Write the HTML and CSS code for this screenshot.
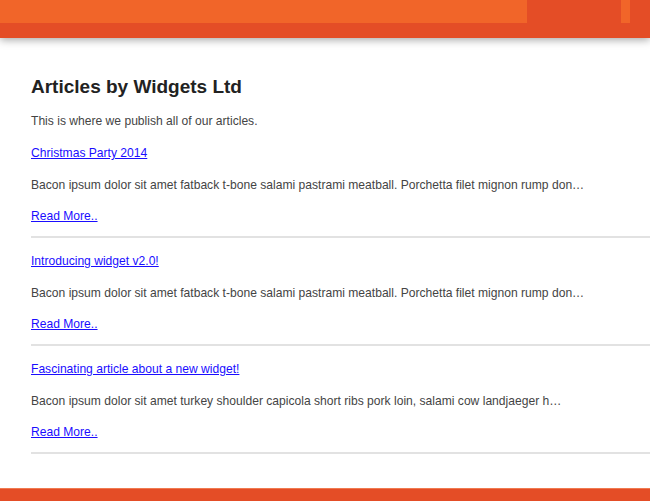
FILE: index.html
```html
<!DOCTYPE html>
<html>
<head>
<meta charset="utf-8">
<link rel="stylesheet" href="styles.css">
</head>
<body>
<header class="top">
  <div class="top-row">
    <div class="top-main"></div>
    <div class="top-gap"></div>
    <div class="top-small"></div>
    <div class="top-end"></div>
  </div>
</header>
<main class="content">
  <h1 class="title">Articles by Widgets Ltd</h1>
  <p class="intro">This is where we publish all of our articles.</p>
  <article class="article">
    <p><a href="#">Christmas Party 2014</a></p>
    <p class="summary">Bacon ipsum dolor sit amet fatback t-bone salami pastrami meatball. Porchetta filet mignon rump don…</p>
    <p><a href="#">Read More..</a></p>
  </article>
  <article class="article">
    <p><a href="#">Introducing widget v2.0!</a></p>
    <p class="summary">Bacon ipsum dolor sit amet fatback t-bone salami pastrami meatball. Porchetta filet mignon rump don…</p>
    <p><a href="#">Read More..</a></p>
  </article>
  <article class="article">
    <p><a href="#">Fascinating article about a new widget!</a></p>
    <p class="summary">Bacon ipsum dolor sit amet turkey shoulder capicola short ribs pork loin, salami cow landjaeger h…</p>
    <p><a href="#">Read More..</a></p>
  </article>
</main>
<footer class="bottom"></footer>
</body>
</html>
```

FILE: styles.css
```css
html, body {
  margin: 0;
  padding: 0;
  height: 100%;
  overflow: hidden;
}
body {
  font-family: "Liberation Sans", Arial, sans-serif;
  color: #444;
  font-size: 12.1px;
  line-height: 18px;
  background: #fff;
  display: flex;
  flex-direction: column;
}
.top {
  height: 38px;
  background: #e44d26;
  box-shadow: 0 2px 8px rgba(0,0,0,0.35);
  position: relative;
  z-index: 1;
  flex: none;
}
.top-row {
  display: flex;
  height: 23px;
}
.top-main {
  width: 527px;
  background: #f16529;
}
.top-gap {
  width: 94px;
}
.top-small {
  width: 9px;
  background: #f16529;
}
.content {
  padding: 0 0 0 31px;
  flex: 1;
}
.title {
  font-size: 19px;
  font-weight: bold;
  color: #222;
  margin: 38px 0 0;
  line-height: 22px;
}
p {
  margin: 13px 0 0;
}
.intro {
  margin-top: 14px;
}
.article {
  border-bottom: 2px solid #e2e2e2;
  padding-bottom: 11px;
}
.article > p:first-child {
  margin-top: 14px;
}
.article > .summary {
  margin-top: 14px;
}
a {
  color: #1a0dff;
}
.bottom {
  height: 12px;
  background: #e44d26;
  border-top: 1px solid #f07a50;
  flex: none;
}
```
